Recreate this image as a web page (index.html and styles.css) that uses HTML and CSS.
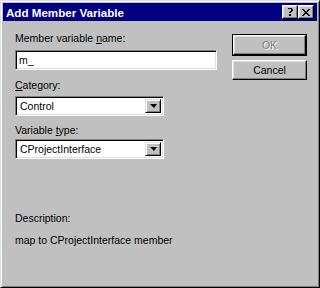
FILE: index.html
```html
<!DOCTYPE html>
<html>
<head>
    <meta charset="UTF-8">
    <title>Add Member Variable</title>
    <link rel="stylesheet" href="styles.css">
</head>
<body>
    <div class="window">
        <div class="titlebar">
            <span class="title">Add Member Variable</span>
            <div class="title-buttons">
                <span class="tbtn">
                    <svg width="8" height="8" viewBox="0 0 8 8" shape-rendering="crispEdges"><path d="M1 1h1v-1h4v1h1v2h-1v1h-1v1h-2v-1h1v-1h1v-2h-4v1h-1z M3 6h2v2h-2z" fill="#000"/></svg>
                </span>
                <span class="tbtn close">
                    <svg width="8" height="7" viewBox="0 0 8 7" shape-rendering="crispEdges"><path d="M0 0h2v1h1v1h2v-1h1v-1h2v1h-1v1h-1v1h-1v1h1v1h1v1h1v1h-2v-1h-1v-1h-2v1h-1v1h-2v-1h1v-1h1v-1h1v-1h-1v-1h-1v-1h-1z" fill="#000"/></svg>
                </span>
            </div>
        </div>
        <div class="client">
            <div class="fields">
                <label class="lbl first">Member variable <u>n</u>ame:</label>
                <div class="edit">m_</div>
                <label class="lbl cat"><u>C</u>ategory:</label>
                <div class="combo c1">
                    <span class="value">Control</span>
                    <span class="drop"><i class="arrow"></i></span>
                </div>
                <label class="lbl vt">Variable <u>t</u>ype:</label>
                <div class="combo c2">
                    <span class="value">CProjectInterface</span>
                    <span class="drop"><i class="arrow"></i></span>
                </div>
                <p class="lbl desc">Description:</p>
                <p class="lbl info">map to CProjectInterface member</p>
            </div>
            <div class="actions">
                <div class="default-frame"><button class="btn ok" disabled>OK</button></div>
                <button class="btn cancel">Cancel</button>
            </div>
        </div>
    </div>
</body>
</html>
```

FILE: styles.css
```css
html, body {
    margin: 0;
    padding: 0;
}

body {
    font-family: "Liberation Sans", Arial, sans-serif;
    font-size: 10.5px;
    color: #000;
    background: #c0c0c0;
}

.window {
    width: 320px;
    height: 288px;
    box-sizing: border-box;
    background: #c0c0c0;
    border: 1px solid;
    border-color: #dfdfdf #000 #000 #dfdfdf;
    box-shadow: inset 1px 1px #fff, inset -1px -1px #808080;
    padding: 2px;
    display: flex;
    flex-direction: column;
}

.titlebar {
    height: 18px;
    background: #000080;
    display: flex;
    align-items: center;
    justify-content: space-between;
    padding: 0 3px 0 3px;
}

.title {
    color: #fff;
    font-weight: bold;
    font-size: 11.6px;
    letter-spacing: 0;
}

.title-buttons {
    display: flex;
}

.tbtn {
    width: 16px;
    height: 14px;
    box-sizing: border-box;
    background: #c0c0c0;
    border: 1px solid;
    border-color: #fff #000 #000 #fff;
    box-shadow: inset -1px -1px #808080, inset 1px 1px #dfdfdf;
    display: flex;
    align-items: center;
    justify-content: center;
}

.tbtn.close {
    margin-left: 0;
}

.client {
    flex: 1;
    display: flex;
    justify-content: space-between;
    padding: 0 10px 0 12px;
}

.fields {
    display: flex;
    flex-direction: column;
    align-items: flex-start;
}

.lbl {
    display: block;
    line-height: 13px;
    margin: 0;
    white-space: nowrap;
}

.lbl.first { margin-top: 11px; }
.lbl.cat { margin-top: 9px; }
.lbl.vt { margin-top: 8px; }
.lbl.desc { margin-top: 53px; }
.lbl.info { margin-top: 9px; }

.edit,
.combo {
    box-sizing: border-box;
    height: 20px;
    background: #fff;
    border: 1px solid;
    border-color: #808080 #fff #fff #808080;
    box-shadow: inset 1px 1px #000, inset -1px -1px #dfdfdf;
    line-height: 18px;
}

.edit {
    width: 202px;
    margin-top: 5px;
    padding-left: 3px;
}

.combo {
    width: 149px;
    display: flex;
    align-items: stretch;
    padding: 2px;
}

.combo.c1 { margin-top: 4px; }
.combo.c2 { margin-top: 2px; }

.combo .value {
    flex: 1;
    line-height: 14px;
    padding-left: 2px;
}

.drop {
    width: 16px;
    box-sizing: border-box;
    background: #c0c0c0;
    border: 1px solid;
    border-color: #dfdfdf #000 #000 #dfdfdf;
    box-shadow: inset 1px 1px #fff, inset -1px -1px #808080;
    display: flex;
    align-items: center;
    justify-content: center;
}

.arrow {
    width: 0;
    height: 0;
    border-left: 4px solid transparent;
    border-right: 3px solid transparent;
    border-top: 4px solid #000;
}

.actions {
    display: flex;
    flex-direction: column;
    padding-top: 13px;
}

.default-frame {
    border: 1px solid #000;
    width: 75px;
    box-sizing: border-box;
}

.btn {
    display: block;
    font-family: inherit;
    font-size: inherit;
    width: 75px;
    height: 20px;
    padding: 0;
    box-sizing: border-box;
    background: #c0c0c0;
    border: 1px solid;
    border-color: #fff #000 #000 #fff;
    box-shadow: inset -1px -1px #808080, inset 1px 1px #dfdfdf;
    color: #000;
}

.btn.ok {
    width: 73px;
    color: #808080;
    text-shadow: 1px 1px #fff;
}

.btn.cancel {
    margin-top: 4px;
}
```
